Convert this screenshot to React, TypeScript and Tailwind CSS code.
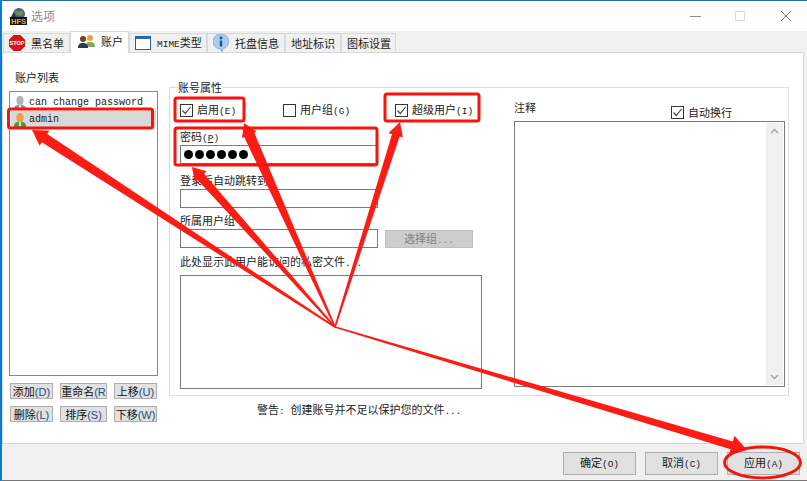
const mono = "font-['Liberation_Mono',monospace] text-[9.5px]"
const label = 'h-[14px] text-[11px] text-[#222] whitespace-nowrap'

type Pt = [number, number]

// tapered arrow from the shared origin to the tip
const arrowPoints = (from: Pt, tip: Pt, shaft: number, wing: number, head: number) => {
  const dx = tip[0] - from[0]
  const dy = tip[1] - from[1]
  const len = Math.hypot(dx, dy)
  const ux = dx / len
  const uy = dy / len
  const bx = tip[0] - ux * head
  const by = tip[1] - uy * head
  const at = (d: number) => `${bx - uy * d},${by + ux * d}`
  const start = (d: number) => `${from[0] - uy * d},${from[1] + ux * d}`
  return [start(0.8), at(shaft / 2), at(wing / 2), `${tip[0]},${tip[1]}`, at(-wing / 2), at(-shaft / 2), start(-0.8)].join(' ')
}

const Annotations = () => {
  const origin: Pt = [335, 327]
  const arrows: { tip: Pt; shaft: number; wing: number; head: number }[] = [
    { tip: [32, 130], shaft: 10, wing: 18, head: 15 },
    { tip: [192, 167], shaft: 9, wing: 16, head: 13 },
    { tip: [244, 123], shaft: 11, wing: 16, head: 13 },
    { tip: [400, 122], shaft: 8, wing: 15, head: 14 },
    { tip: [747, 450], shaft: 8, wing: 20, head: 16 },
  ]
  return (
    <svg className="absolute top-0 left-0 pointer-events-none" width={807} height={481}>
      {arrows.map((a, i) => (
        <polygon key={i} points={arrowPoints(origin, a.tip, a.shaft, a.wing, a.head)} fill="#fd1c13" />
      ))}
      <g fill="none" stroke="#f8130c" strokeWidth={3}>
        <rect x={8.5} y={109} width={144} height={19} rx={2} />
        <rect x={175} y={98} width={69} height={23} rx={2} />
        <rect x={175} y={128} width={202} height={37} rx={2} />
        <rect x={385} y={94} width={94} height={27} rx={2} />
        <ellipse cx={762.5} cy={462.5} rx={38} ry={15.5} />
      </g>
    </svg>
  )
}

const Person = ({ head, body }: { head: string; body: string }) => (
  <svg width={14} height={16} viewBox="0 0 16 18" className="shrink-0">
    <path d="M1 17c0-4 2-6 7-6s7 2 7 6z" fill={body} />
    <path d="M4 7c0-3 1-6 4-6s4 3 4 6-2 5-4 5-4-2-4-5z" fill={head} />
    <path d="M4 6c0-3 1-5 4-5s4 2 4 5c-2-2-6-2-8 0z" fill={head} opacity={0.75} />
    <path d="M7 11h2l.5 5h-3z" fill="#fff" opacity={0.7} />
  </svg>
)

const HfsLogo = () => (
  <svg width={17} height={17} viewBox="0 0 17 17">
    <circle cx={9} cy={6} r={6} fill="#3f5f86" />
    <path d="M5 2l4 1 3-1 2 4-4 2-3-1-3 1z" fill="#6f8a4a" />
    <path d="M3 5l-2 4h5l-1-4z" fill="#27374f" />
    <rect x={0} y={9} width={17} height={8} fill="#111" />
    <text x={8.5} y={16} textAnchor="middle" fontSize={7.5} fontWeight={700} fill="#f5b400" fontFamily="Liberation Sans">HFS</text>
  </svg>
)

const TabIcons = {
  stop: (
    <svg width={16} height={16} viewBox="0 0 16 16">
      <polygon points="5,0 11,0 16,5 16,11 11,16 5,16 0,11 0,5" fill="#d8141a" stroke="#8e0b0f" strokeWidth={0.5} />
      <text x={8} y={10} textAnchor="middle" fontSize={5.6} fontWeight={700} fill="#fff" fontFamily="Liberation Sans">STOP</text>
    </svg>
  ),
  users: (
    <svg width={17} height={14} viewBox="0 0 17 14">
      <circle cx={12} cy={4} r={3} fill="#f0a040" />
      <path d="M8 13c0-4 1-5 4-5s5 1 5 5z" fill="#7fa860" />
      <circle cx={5} cy={5} r={3} fill="#7a3d20" />
      <path d="M0 14c0-4 2-5 5-5s5 1 5 5z" fill="#2b3a55" />
    </svg>
  ),
  window: (
    <svg width={16} height={14} viewBox="0 0 16 14">
      <rect x={0.5} y={0.5} width={15} height={13} fill="#fff" stroke="#2a5d9c" />
      <rect x={1} y={1} width={14} height={2} fill="#2a6bc0" />
    </svg>
  ),
  info: (
    <svg width={16} height={18} viewBox="0 0 16 18">
      <path d="M8 0a7.5 7.5 0 0 1 2 14.8L9 18l-2-3A7.5 7.5 0 0 1 8 0z" fill="#a9cdf0" stroke="#6b9bd0" strokeWidth={0.6} />
      <circle cx={8} cy={4} r={1.4} fill="#1e4f9c" />
      <rect x={6.8} y={6.5} width={2.4} height={6} fill="#1e4f9c" />
    </svg>
  ),
}

const Tab = ({ w, icon, active, children }: { w: string; icon?: React.ReactNode; active?: boolean; children: React.ReactNode }) => (
  <div
    className={
      active
        ? `${w} h-[22px] -mb-px relative bg-white border border-b-0 border-[#d9d9d9] flex items-center gap-[6px] pl-[7px] pb-[3px] text-[11px] text-[#222]`
        : `${w} h-[19px] bg-[#f0f0f0] border border-b-0 border-[#d9d9d9] flex items-center gap-[6px] pl-[5px] text-[11px] text-[#222]`
    }
  >
    {icon}
    <span className="whitespace-nowrap">{children}</span>
  </div>
)

const Checkbox = ({ checked, w, text, hot }: { checked?: boolean; w: string; text: string; hot?: string }) => (
  <div className={`${w} h-[14px] flex items-center gap-[4px] text-[11px] text-[#222] whitespace-nowrap`}>
    <span className="w-[13px] h-[13px] border border-[#333] bg-white flex items-center justify-center shrink-0">
      {checked && (
        <svg width={11} height={11} viewBox="0 0 11 11">
          <path d="M1.5 5.5l2.8 3L9.5 2" fill="none" stroke="#444" strokeWidth={1.2} />
        </svg>
      )}
    </span>
    <span>
      {text}
      {hot && <span className={mono}>{hot}</span>}
    </span>
  </div>
)

const SmallBtn = ({ w, text, hot }: { w: string; text: string; hot: string }) => (
  <div className={`${w} h-[16px] bg-[#e1e1e1] border border-[#adadad] flex items-center justify-center overflow-hidden text-[11px] text-[#111] whitespace-nowrap`}>
    <span>
      {text}
      <span className="font-['Liberation_Sans',sans-serif] text-[#1f4f80]">{hot}</span>
    </span>
  </div>
)

const FootBtn = ({ text, hot }: { text: string; hot: string }) => (
  <div className="w-[73px] h-[23px] bg-[#e1e1e1] border border-[#adadad] flex items-center justify-center text-[11px] text-[#222]">
    <span>
      {text}
      <span className={mono}>{hot}</span>
    </span>
  </div>
)

const Field = ({ w, h, children }: { w: string; h: string; children?: React.ReactNode }) => (
  <div className={`${w} ${h} border border-[#7a7a7a] bg-white flex items-center`}>{children}</div>
)

export default function App() {
  return (
    <div className="relative w-[807px] h-[481px] overflow-hidden bg-[#f0f0f0] flex flex-col border-l-2 border-l-[#0a7bd0] border-t border-t-[#2b6ca3] border-b border-b-[#777777] font-['Noto_Sans_CJK_SC',sans-serif] leading-[14px]">
      {/* title bar */}
      <div className="h-[30px] bg-white flex items-center pl-[8px] shrink-0">
        <HfsLogo />
        <span className="ml-[4px] text-[12px] text-[#8a8a8a]">选项</span>
        <div className="ml-auto flex items-center pr-[15px]">
          <span className="w-[11px] h-px bg-[#8a8a8a]" />
          <span className="ml-[34px] w-[10px] h-[10px] border border-[#d9d9d9]" />
          <svg className="ml-[35px]" width={12} height={12} viewBox="0 0 12 12">
            <path d="M1 1l10 10M11 1L1 11" stroke="#777" strokeWidth={1} />
          </svg>
        </div>
      </div>

      {/* tabs */}
      <div className="h-[21px] flex items-end pl-[1px] shrink-0">
        <Tab w="w-[67px]" icon={TabIcons.stop}>黑名单</Tab>
        <Tab w="w-[59px]" icon={TabIcons.users} active>账户</Tab>
        <Tab w="w-[78px]" icon={TabIcons.window}>
          <span className={mono}>MIME</span>类型
        </Tab>
        <Tab w="w-[78px]" icon={TabIcons.info}>托盘信息</Tab>
        <Tab w="w-[56px]">地址标识</Tab>
        <Tab w="w-[55px]">图标设置</Tab>
      </div>

      {/* panel */}
      <div className="h-[392px] mr-[3px] shrink-0 bg-white border border-[#d9d9d9] flex items-start pl-[6px]">
        <div className="w-[149px] pt-[17px] shrink-0">
          <div className={`${label} pl-[6px] mb-[7px]`}>账户列表</div>
          <div className="h-[285px] border border-[#828790] bg-white px-[1px] pt-[2px]">
            <div className="h-[17px] flex items-center gap-[2px] pl-[2px]">
              <Person head="#b5b5b5" body="#8e8e8e" />
              <span className="font-['Liberation_Mono',monospace] text-[10px] text-[#222]">can change password</span>
            </div>
            <div className="h-[17px] flex items-center gap-[2px] pl-[2px] bg-[#d9d9d9]">
              <Person head="#f0a040" body="#3f9a3f" />
              <span className="font-['Liberation_Mono',monospace] text-[10px] text-[#222]">admin</span>
            </div>
          </div>
          <div className="mt-[7px] flex pl-px gap-[7px]">
            <SmallBtn w="w-[43px]" text="添加" hot="(D)" />
            <SmallBtn w="w-[47px]" text="重命名" hot="(R" />
            <SmallBtn w="w-[43px]" text="上移" hot="(U)" />
          </div>
          <div className="mt-[7px] flex pl-px gap-[7px]">
            <SmallBtn w="w-[43px]" text="删除" hot="(L)" />
            <SmallBtn w="w-[47px]" text="排序" hot="(S)" />
            <SmallBtn w="w-[43px]" text="下移" hot="(W)" />
          </div>
        </div>

        <div className="ml-[11px] mt-[34px] w-[620px] shrink-0">
          <div className="h-[309px] border border-[#dcdcdc] pl-[10px]">
            <div className={`${label} -mt-[8px] -ml-[2px] w-fit bg-white`}>账号属性</div>
            <div className="flex items-start">
              <div className="w-[302px] shrink-0 pt-[9px]">
                <div className="flex">
                  <Checkbox w="w-[103px]" checked text="启用" hot="(E)" />
                  <Checkbox w="w-[112px]" text="用户组" hot="(G)" />
                  <Checkbox w="w-[87px]" checked text="超级用户" hot="(I)" />
                </div>
                <div className={`${label} mt-[12px]`}>
                  密码<span className={mono}>(<span className="underline">P</span>)</span>
                </div>
                <div className="mt-[2px]">
                  <Field w="w-[198px]" h="h-[19px]">
                    <span className="flex gap-[2px] pl-[3px]">
                      {[0, 1, 2, 3, 4, 5].map((d) => (
                        <span key={d} className="w-[9px] h-[9px] rounded-full bg-black" />
                      ))}
                    </span>
                  </Field>
                </div>
                <div className={`${label} mt-[9px]`}>登录后自动跳转到</div>
                <div className="mt-[2px]">
                  <Field w="w-[198px]" h="h-[19px]" />
                </div>
                <div className={`${label} mt-[5px]`}>所属用户组</div>
                <div className="mt-[2px] flex">
                  <Field w="w-[198px]" h="h-[19px]" />
                  <div className="ml-[7px] w-[88px] h-[18px] mt-px bg-[#cccccc] border border-[#bfbfbf] flex items-center justify-center text-[11px] text-[#808080]">
                    <span>选择组<span className={mono}>...</span></span>
                  </div>
                </div>
                <div className={`${label} mt-[6px]`}>
                  此处显示此用户能访问的私密文件<span className={mono}>...</span>
                </div>
                <div className="mt-[7px]">
                  <Field w="w-[302px]" h="h-[114px]" />
                </div>
              </div>

              <div className="ml-[32px] w-[272px] shrink-0 pt-[6px]">
                <div className="h-[21px] flex items-start">
                  <span className="text-[11px] text-[#222]">注释</span>
                  <div className="ml-[135px] mt-[5px]">
                    <Checkbox w="w-[90px]" checked text="自动换行" />
                  </div>
                </div>
                <div className="h-[266px] w-[271px] border border-[#7a7a7a] bg-white flex justify-end pr-px py-px">
                  <div className="w-[17px] bg-[#f0f0f0] flex flex-col items-center justify-between py-[5px]">
                    <svg width={9} height={6} viewBox="0 0 9 6">
                      <path d="M1 5l3.5-3.5L8 5" fill="none" stroke="#a6a6a6" strokeWidth={1.5} />
                    </svg>
                    <svg width={9} height={6} viewBox="0 0 9 6">
                      <path d="M1 1l3.5 3.5L8 1" fill="none" stroke="#a6a6a6" strokeWidth={1.5} />
                    </svg>
                  </div>
                </div>
              </div>
            </div>
          </div>
          <div className={`${label} mt-[6px] pl-[88px]`}>
            警告<span className={mono}>: </span>创建账号并不足以保护您的文件<span className={mono}>...</span>
          </div>
        </div>
      </div>

      {/* footer buttons */}
      <div className="flex-1 flex justify-end items-start gap-[9px] pt-[8px] pr-[7px]">
        <FootBtn text="确定" hot="(O)" />
        <FootBtn text="取消" hot="(C)" />
        <FootBtn text="应用" hot="(A)" />
      </div>

      <div className="absolute -top-px -left-[2px]">
        <Annotations />
      </div>
    </div>
  )
}
